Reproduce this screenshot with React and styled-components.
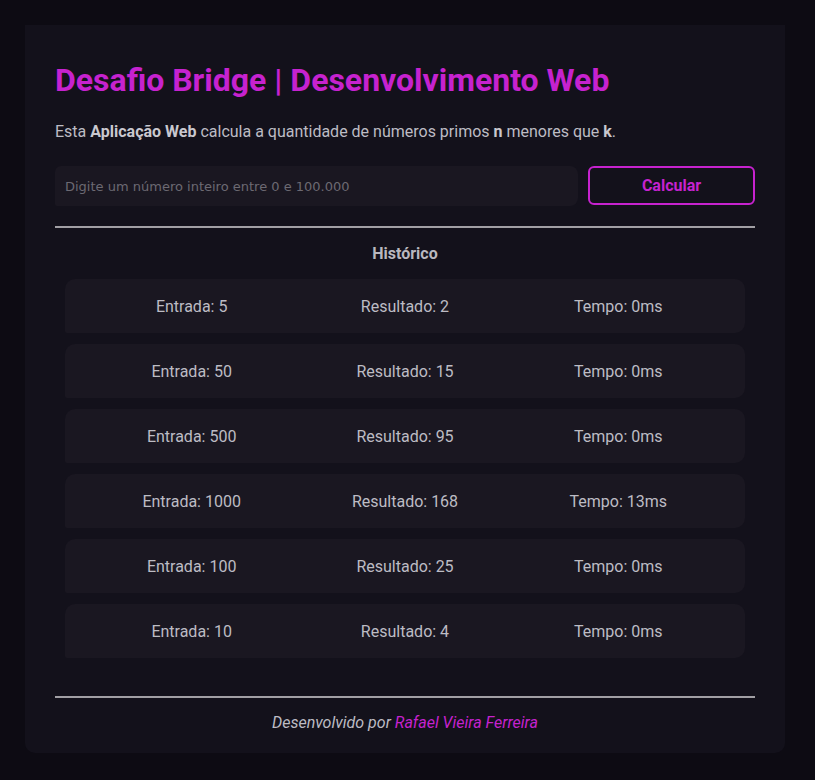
import styled, { createGlobalStyle } from "styled-components";

const GlobalStyle = createGlobalStyle`
  body {
    margin: 0;
    background-color: #0d0b13;
    font-family: Roboto, "Liberation Sans", sans-serif;
  }
`;

const history = [
  { entrada: 5, resultado: 2, tempo: 0 },
  { entrada: 50, resultado: 15, tempo: 0 },
  { entrada: 500, resultado: 95, tempo: 0 },
  { entrada: 1000, resultado: 168, tempo: 13 },
  { entrada: 100, resultado: 25, tempo: 0 },
  { entrada: 10, resultado: 4, tempo: 0 },
];

const App = () => {
  return (
    <>
      <GlobalStyle />
      <Card>
        <Title>Desafio Bridge | Desenvolvimento Web</Title>
        <Description>
          Esta <b>Aplicação Web</b> calcula a quantidade de números primos <b>n</b> menores que <b>k</b>.
        </Description>

        <Form>
          <Input placeholder="Digite um número inteiro entre 0 e 100.000" />
          <Button>Calcular</Button>
        </Form>

        <Divider />

        <HistoryTitle>Histórico</HistoryTitle>
        <List>
          {history.map((item, i) => (
            <Row key={i}>
              <span>Entrada: {item.entrada}</span>
              <span>Resultado: {item.resultado}</span>
              <span>Tempo: {item.tempo}ms</span>
            </Row>
          ))}
        </List>

        <Divider $top={38} />
        <Footer>
          Desenvolvido por <Author>Rafael Vieira Ferreira</Author>
        </Footer>
      </Card>
    </>
  );
};

const Card = styled.main`
  width: 760px;
  box-sizing: border-box;
  margin: 25px;
  padding: 36px 30px 21px;
  background-color: #13111b;
  border-radius: 0 0 10px 10px;
`;

const Title = styled.h1`
  margin: 0;
  font-size: 32px;
  font-weight: 700;
  color: #c622cf;
`;

const Description = styled.p`
  margin: 23px 0 0;
  font-size: 16px;
  color: #bdbcc4;

  b {
    font-weight: 700;
    color: #c9c8cf;
  }
`;

const Form = styled.div`
  display: flex;
  gap: 10px;
  margin-top: 25px;
`;

const Input = styled.input`
  flex: 1;
  height: 40px;
  box-sizing: border-box;
  padding: 0 10px;
  border: none;
  outline: none;
  border-radius: 6px 8px 8px 2px;
  background-color: #1a1721;
  font-family: "DejaVu Sans", sans-serif;
  font-size: 13px;
  color: #bdbcc4;

  &::placeholder {
    color: #6c6972;
  }
`;

const Button = styled.button`
  width: 167px;
  height: 39px;
  box-sizing: border-box;
  border: 2px solid #c622cf;
  border-radius: 6px;
  background-color: #13111b;
  color: #c622cf;
  font-family: Roboto, "Liberation Sans", sans-serif;
  font-size: 16px;
  font-weight: 700;
  cursor: pointer;
`;

const Divider = styled.hr`
  margin: ${(p) => p.$top || 20}px 0 0;
  border: none;
  height: 2px;
  background-color: #a19fa4;
`;

const HistoryTitle = styled.h2`
  margin: 16px 0 0;
  text-align: center;
  font-size: 16px;
  font-weight: 700;
  color: #b9b8bf;
`;

const List = styled.ul`
  list-style: none;
  margin: 16px 0 0;
  padding: 0 10px;
  display: flex;
  flex-direction: column;
  gap: 11px;
`;

const Row = styled.li`
  display: grid;
  grid-template-columns: repeat(3, 1fr);
  align-items: center;
  height: 54px;
  padding: 0 20px;
  border-radius: 10px 10px 10px 2px;
  background-color: #1a1721;
  font-size: 16px;
  color: #bdbcc4;

  span {
    text-align: center;
  }
`;

const Footer = styled.footer`
  margin-top: 15px;
  text-align: center;
  font-size: 16px;
  font-style: italic;
  color: #bdbcc4;
`;

const Author = styled.span`
  color: #c622cf;
`;

export default App;
